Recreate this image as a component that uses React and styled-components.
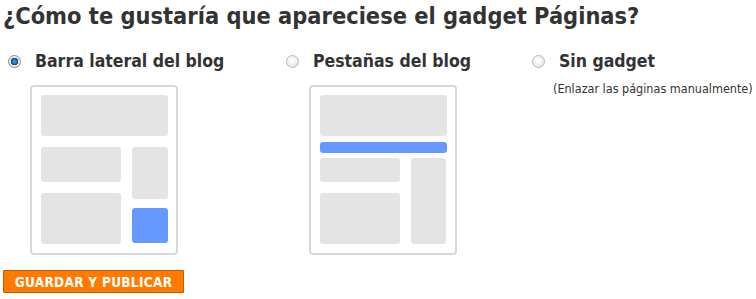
import React from 'react';
import styled, { createGlobalStyle } from 'styled-components';

var GlobalStyle = createGlobalStyle`
  body {
    margin: 0;
    background: #ffffff;
  }
`

var Page = styled.div`
  padding: 0 3px;
  font-family: "DejaVu Sans Condensed", "DejaVu Sans", sans-serif;
  color: #333333;
`

var Title = styled.h2`
  margin: 0;
  padding-top: 2px;
  font-size: 23.4px;
  line-height: 28px;
  font-weight: bold;
`

var Options = styled.div`
  display: flex;
  flex-direction: row;
  margin-top: 18px;
`

var Column = styled.div`
  width: ${props => props.width ? props.width + 'px' : 'auto'};
  flex-shrink: 0;
`

var OptionRow = styled.label`
  display: flex;
  flex-direction: row;
  align-items: center;
  height: 26px;
`

var Radio = styled.span`
  display: inline-block;
  box-sizing: border-box;
  width: 13px;
  height: 13px;
  margin: 0 14px 0 5px;
  border-radius: 50%;
  border: 1px solid ${props => props.checked ? '#8a8a8a' : '#b8b8b8'};
  background: ${props => props.checked
    ? 'radial-gradient(circle at 50% 50%, #3fa3e8 0, #1a6fb8 2.5px, #0d3f6e 3.5px, #e8e8e8 4px, #f8f8f8 100%)'
    : 'radial-gradient(circle at 45% 40%, #ffffff 0, #ececec 60%, #d8d8d8 100%)'};
`

var LabelText = styled.span`
  font-size: 17.5px;
  font-weight: bold;
`

var Note = styled.div`
  margin: 7px 0 0 26px;
  font-size: 12.5px;
  line-height: 16px;
`

var Card = styled.div`
  box-sizing: border-box;
  width: 148px;
  height: 170px;
  margin: 11px 0 0 ${props => props.indent}px;
  padding: 8px 9px 9px 9px;
  border: 2px solid #d8d8d8;
  border-radius: 4px;
  display: flex;
  flex-direction: column;
  gap: ${props => props.gap}px;
`

var Stack = styled.div`
  display: flex;
  flex-direction: column;
  gap: ${props => props.gap}px;
`

var Split = styled.div`
  display: flex;
  flex-direction: row;
  gap: 11px;
`

var Block = styled.div`
  width: ${props => props.w}px;
  height: ${props => props.h}px;
  margin: ${props => props.spacing || '0'};
  border-radius: 3px;
  background-color: ${props => props.blue ? '#6699ff' : '#e4e4e4'};
`

var SaveButton = styled.button`
  display: block;
  box-sizing: border-box;
  width: 181px;
  height: 23px;
  margin-top: 15px;
  padding: 0;
  border: 1px solid #c25c00;
  border-radius: 1px;
  background-color: #ff7b00;
  color: #ffffff;
  font-family: "DejaVu Sans Condensed", "DejaVu Sans", sans-serif;
  font-size: 13.5px;
  font-weight: bold;
  letter-spacing: 0.3px;
`

var App = () => {
  return (
    <Page>
      <GlobalStyle />
      <Title>¿Cómo te gustaría que apareciese el gadget Páginas?</Title>
      <Options>
        <Column width={278}>
          <OptionRow>
            <Radio checked />
            <LabelText>Barra lateral del blog</LabelText>
          </OptionRow>
          <Card indent={27} gap={11}>
            <Block w={127} h={41} />
            <Split>
              <Stack gap={11}>
                <Block w={80} h={35} />
                <Block w={80} h={51} />
              </Stack>
              <Stack gap={9}>
                <Block w={36} h={52} />
                <Block w={36} h={35} blue />
              </Stack>
            </Split>
          </Card>
        </Column>
        <Column width={246}>
          <OptionRow>
            <Radio />
            <LabelText>Pestañas del blog</LabelText>
          </OptionRow>
          <Card indent={28} gap={0}>
            <Block w={127} h={41} />
            <Block w={127} h={11} blue spacing="6px 0 5px 0" />
            <Split>
              <Stack gap={11}>
                <Block w={80} h={24} />
                <Block w={80} h={51} />
              </Stack>
              <Block w={36} h={86} />
            </Split>
          </Card>
        </Column>
        <Column>
          <OptionRow>
            <Radio />
            <LabelText>Sin gadget</LabelText>
          </OptionRow>
          <Note>(Enlazar las páginas manualmente)</Note>
        </Column>
      </Options>
      <SaveButton>GUARDAR Y PUBLICAR</SaveButton>
    </Page>
  );
};

export default App;
